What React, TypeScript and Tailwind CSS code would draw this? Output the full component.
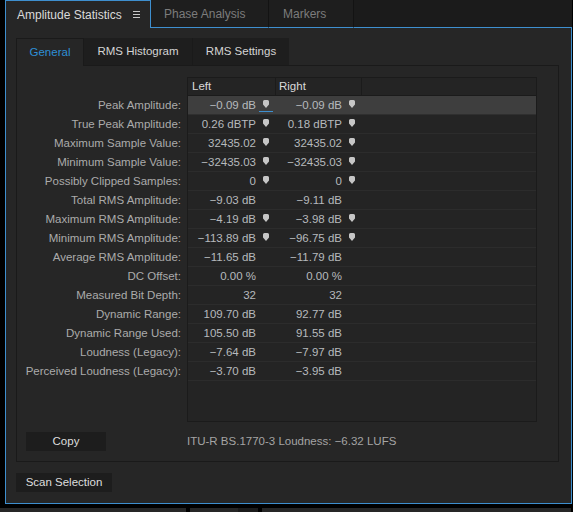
const BLUE = "#3e8fcf";

type Row = {
  label: string;
  left: string;
  right: string;
  peak?: boolean;
};

const rows: Row[] = [
  { label: "Peak Amplitude:", left: "−0.09 dB", right: "−0.09 dB", peak: true },
  { label: "True Peak Amplitude:", left: "0.26 dBTP", right: "0.18 dBTP", peak: true },
  { label: "Maximum Sample Value:", left: "32435.02", right: "32435.02", peak: true },
  { label: "Minimum Sample Value:", left: "−32435.03", right: "−32435.03", peak: true },
  { label: "Possibly Clipped Samples:", left: "0", right: "0", peak: true },
  { label: "Total RMS Amplitude:", left: "−9.03 dB", right: "−9.11 dB" },
  { label: "Maximum RMS Amplitude:", left: "−4.19 dB", right: "−3.98 dB", peak: true },
  { label: "Minimum RMS Amplitude:", left: "−113.89 dB", right: "−96.75 dB", peak: true },
  { label: "Average RMS Amplitude:", left: "−11.65 dB", right: "−11.79 dB" },
  { label: "DC Offset:", left: "0.00 %", right: "0.00 %" },
  { label: "Measured Bit Depth:", left: "32", right: "32" },
  { label: "Dynamic Range:", left: "109.70 dB", right: "92.77 dB" },
  { label: "Dynamic Range Used:", left: "105.50 dB", right: "91.55 dB" },
  { label: "Loudness (Legacy):", left: "−7.64 dB", right: "−7.97 dB" },
  { label: "Perceived Loudness (Legacy):", left: "−3.70 dB", right: "−3.95 dB" },
];

function PeakMarker() {
  return (
    <svg width="6" height="8" viewBox="0 0 6 8" className="mb-[3px]">
      <path
        d="M1.5 0h3A1.5 1.5 0 0 1 6 1.5V4.6L3 8 0 4.6V1.5A1.5 1.5 0 0 1 1.5 0z"
        fill="#c6c6c6"
      />
    </svg>
  );
}

function Hamburger() {
  return (
    <svg width="7" height="7" viewBox="0 0 7 7">
      <rect x="0" y="0" width="7" height="1" fill="#c8c8c8" />
      <rect x="0" y="3" width="7" height="1" fill="#c8c8c8" />
      <rect x="0" y="6" width="7" height="1" fill="#c8c8c8" />
    </svg>
  );
}

function ValueCell({
  value,
  peak,
  focused,
  width,
}: {
  value: string;
  peak?: boolean;
  focused?: boolean;
  width: string;
}) {
  return (
    <div className={`${width} flex h-full items-center border-r border-transparent`}>
      <span className="flex-1 pt-[1px] pr-[1px] text-right whitespace-nowrap">{value}</span>
      <span className="relative flex h-full w-[18px] items-center justify-center">
        {peak && <PeakMarker />}
        {focused && (
          <span className="absolute bottom-[2px] left-[2px] h-[1px] w-[14px] bg-[#3e8fcf]" />
        )}
      </span>
    </div>
  );
}

export default function App() {
  return (
    <div className="h-[512px] w-[573px] overflow-hidden bg-black font-['Liberation_Sans',Arial,sans-serif] text-[11.5px]">
      <div className="ml-[5px] w-[567px]">
        {/* panel tabs */}
        <div className="flex h-[28px] text-[12px]">
          <div
            className="flex h-[28px] w-[146px] items-center gap-[11px] border-x border-t bg-[#262626] pl-[11px] text-[#dadada]"
            style={{ borderColor: BLUE }}
          >
            <span>Amplitude Statistics</span>
            <Hamburger />
          </div>
          <div className="flex w-[118px] items-center border-r border-b border-r-[#131313] border-b-[#3e8fcf] bg-[#1e1e1e] pt-[1px] pl-[13px] text-[#7c7c7c]">
            Phase Analysis
          </div>
          <div className="flex w-[85px] items-center border-r border-b border-r-[#131313] border-b-[#3e8fcf] bg-[#1e1e1e] pt-[1px] pl-[14px] text-[#7c7c7c]">
            Markers
          </div>
          <div className="flex-1 border-b border-b-[#3e8fcf] bg-[#1b1b1b]" />
        </div>

        {/* panel body */}
        <div className="h-[476px] border-x border-b border-[#3e8fcf] bg-[#262626] px-[10px] pt-[10px]">
          <div className="w-[543px]">
            <div className="flex h-[28px]">
              <div className="flex w-[68px] items-center justify-center border-x border-t border-[#1a1a1a] pt-[1px] text-[#2e8fd5]">
                General
              </div>
              <div className="flex w-[109px] items-center justify-center border-r border-b border-[#1a1a1a] bg-[#1e1e1e] pt-[1px] text-[#d4d4d4]">
                RMS Histogram
              </div>
              <div className="flex w-[96px] items-center justify-center border-b border-[#1a1a1a] bg-[#1e1e1e] pt-[1px] text-[#d4d4d4]">
                RMS Settings
              </div>
              <div className="flex-1 border-b border-[#1a1a1a]" />
            </div>

            <div className="flex h-[396px] flex-col border-x border-b border-[#1a1a1a] pt-[11px]">
              <div className="flex">
                <div className="w-[170px] pt-[19px] pr-[6px] text-[#ababab]">
                  {rows.map((r) => (
                    <div key={r.label} className="flex h-[19px] items-center justify-end pt-[1px] whitespace-nowrap">
                      {r.label}
                    </div>
                  ))}
                </div>

                <div className="h-[345px] w-[350px] border border-[#1b1b1b] bg-[#242424] text-[#b6babd]">
                  <div className="flex h-[18px] border-b border-[#1b1b1b] text-[#dadada]">
                    <div className="flex w-[88px] items-center border-r border-[#1b1b1b] pt-[1px] pl-[4px]">Left</div>
                    <div className="flex w-[86px] items-center border-r border-[#1b1b1b] pt-[1px] pl-[3px]">Right</div>
                  </div>
                  {rows.map((r, i) => (
                    <div
                      key={r.label}
                      className={`flex h-[19px] border-b ${
                        i === 0 ? "border-[#2f2f2f] bg-[#3e3e3e]" : "border-[#2c2c2c]"
                      }`}
                    >
                      <ValueCell value={r.left} peak={r.peak} focused={i === 0} width="w-[88px]" />
                      <ValueCell value={r.right} peak={r.peak} width="w-[86px]" />
                    </div>
                  ))}
                </div>
              </div>

              <div className="mt-[10px] flex h-[19px] items-center">
                <div className="w-[170px] pl-[9px]">
                  <button className="flex h-[19px] w-[80px] items-center justify-center bg-[#1d1d1d] pt-[1px] text-[#dedede]">
                    Copy
                  </button>
                </div>
                <span className="pt-[1px] text-[#a4a4a4]">ITU-R BS.1770-3 Loudness: −6.32 LUFS</span>
              </div>
            </div>

            <button className="mt-[11px] flex h-[19px] w-[96px] items-center justify-center bg-[#1d1d1d] pt-[1px] text-[#dedede]">
              Scan Selection
            </button>
          </div>
        </div>
      </div>

      <div className="mt-[4px] flex h-[5px]">
        <div className="w-[186px] bg-[#262626]" />
        <div className="ml-[4px] w-[48px] bg-[#262626]" />
        <div className="w-[20px] bg-[#1b1b1b]" />
        <div className="ml-[4px] w-[309px] bg-[#262626]" />
      </div>
    </div>
  );
}
